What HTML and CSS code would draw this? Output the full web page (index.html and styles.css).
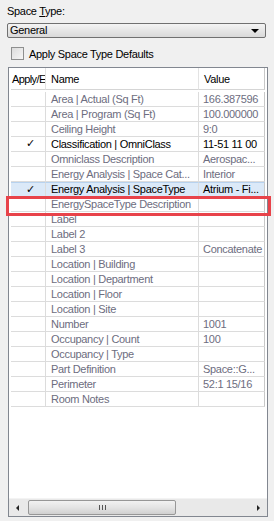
FILE: index.html
```html
<!DOCTYPE html>
<html>
<head>
<meta charset="utf-8">
<link rel="stylesheet" href="styles.css">
</head>
<body>
<div class="label">Space <u>T</u>ype:</div>
<div class="combo"><span>General</span><span class="arrow"></span></div>
<div class="check-row"><span class="checkbox"></span><span>Apply Space Type Defaults</span></div>
<div class="panel">
  <div class="grid-wrap">
    <div class="grid">
      <div class="hcell apply">Apply/E</div><div class="hcell">Name</div><div class="hcell last">Value</div>

      <div class="c"></div><div class="c g">Area | Actual (Sq Ft)</div><div class="c g v">166.387596</div>
      <div class="c"></div><div class="c g">Area | Program (Sq Ft)</div><div class="c g v">100.000000</div>
      <div class="c"></div><div class="c g">Ceiling Height</div><div class="c g v">9:0</div>
      <div class="c ck">✓</div><div class="c">Classification | OmniClass</div><div class="c v">11-51 11 00</div>
      <div class="c"></div><div class="c g">Omniclass Description</div><div class="c g v">Aerospac...</div>
      <div class="c"></div><div class="c g">Energy Analysis | Space Cat...</div><div class="c g v">Interior</div>
      <div class="c ck sel">✓</div><div class="c sel">Energy Analysis | SpaceType</div><div class="c v sel">Atrium - Fi...</div>
      <div class="c"></div><div class="c g">EnergySpaceType Description</div><div class="c g v"></div>
      <div class="c"></div><div class="c g">Label</div><div class="c g v"></div>
      <div class="c"></div><div class="c g">Label 2</div><div class="c g v"></div>
      <div class="c"></div><div class="c g">Label 3</div><div class="c g v">Concatenate</div>
      <div class="c"></div><div class="c g">Location | Building</div><div class="c g v"></div>
      <div class="c"></div><div class="c g">Location | Department</div><div class="c g v"></div>
      <div class="c"></div><div class="c g">Location | Floor</div><div class="c g v"></div>
      <div class="c"></div><div class="c g">Location | Site</div><div class="c g v"></div>
      <div class="c"></div><div class="c g">Number</div><div class="c g v">1001</div>
      <div class="c"></div><div class="c g">Occupancy | Count</div><div class="c g v">100</div>
      <div class="c"></div><div class="c g">Occupancy | Type</div><div class="c g v"></div>
      <div class="c"></div><div class="c g">Part Definition</div><div class="c g v">Space::G...</div>
      <div class="c"></div><div class="c g">Perimeter</div><div class="c g v">52:1 15/16</div>
      <div class="c"></div><div class="c g">Room Notes</div><div class="c g v"></div>
    </div>
  </div>
  <div class="hscroll">
    <div class="sbtn"><span class="tri-l"></span></div>
    <div class="track"><div class="thumb"><span class="grip"></span></div></div>
    <div class="sbtn"><span class="tri-r"></span></div>
  </div>
</div>
<div class="redbox"></div>
</body>
</html>
```
FILE: styles.css
```css
html, body {
  margin: 0;
  padding: 0;
}
body {
  width: 274px;
  height: 521px;
  background: #f0f0f0;
  font-family: "Liberation Sans", Arial, sans-serif;
  font-size: 11px;
  letter-spacing: -0.3px;
  color: #000;
  position: relative;
  overflow: hidden;
}
.label {
  padding: 5px 0 0 7px;
  height: 13px;
  line-height: 13px;
}
.combo {
  margin: 5px 0 0 7px;
  width: 255px;
  height: 13px;
  border: 1px solid #707070;
  border-radius: 2px;
  background: linear-gradient(#f4f4f4, #e6e6e6 50%, #d9d9d9);
  display: flex;
  align-items: center;
  justify-content: space-between;
  padding-left: 2px;
  line-height: 13px;
}
.arrow {
  width: 0;
  height: 0;
  border-left: 4px solid transparent;
  border-right: 4px solid transparent;
  border-top: 4px solid #000;
  margin-right: 6px;
}
.check-row {
  display: flex;
  align-items: center;
  margin: 9px 0 0 11px;
  height: 13px;
  gap: 5px;
}
.checkbox {
  width: 11px;
  height: 11px;
  border: 1px solid #8e8f8f;
  background: linear-gradient(135deg, #dcdcdc, #f6f6f6);
  box-sizing: content-box;
}
.panel {
  position: absolute;
  left: 8px;
  top: 67px;
  width: 258px;
  height: 448px;
  border: 1px solid #828790;
  background: #fff;
  display: flex;
  flex-direction: column;
}
.grid-wrap {
  flex: 1;
  padding-left: 2px;
  overflow: hidden;
}
.grid {
  display: grid;
  grid-template-columns: 35px 153px 66px;
  grid-template-rows: 24px;
  grid-auto-rows: 15px;
}
.grid .hcell {
  height: 21px;
  line-height: 22px;
  padding-left: 5px;
  border-right: 1px solid #e3e3e3;
  border-bottom: 1px solid #d5d5d5;
  white-space: nowrap;
  overflow: hidden;
  margin-bottom: 2px;
  position: relative;
}
.grid .hcell::after {
  content: "";
  position: absolute;
  left: 0;
  right: -1px;
  bottom: -3px;
  height: 1px;
  background: #a0a0a0;
}
.grid .hcell.apply {
  padding-left: 1px;
  letter-spacing: -0.6px;
}
.grid .hcell.last {
  border-right: 1px solid #c8c8c8;
}
.c {
  border-right: 1px solid #dcdcdc;
  border-bottom: 1px solid #dcdcdc;
  padding-left: 5px;
  line-height: 14px;
  white-space: nowrap;
  overflow: hidden;
  color: #000;
}
.c.g {
  color: #6d6d80;
}
.c.v {
  padding-left: 4px;
  border-right-color: #c8c8c8;
}
.c.ck {
  padding-left: 15px;
  font-family: "DejaVu Sans", sans-serif;
  font-size: 11px;
}
.c.sel {
  background: #dbe9f8;
  border-top: 1px solid #b7d2ef;
  line-height: 13px;
}
.hscroll {
  height: 17px;
  display: flex;
  align-items: stretch;
  background: #e9e9e9;
  border-top: 1px solid #f3f3f3;
}
.sbtn {
  width: 17px;
  display: flex;
  align-items: center;
  justify-content: center;
}
.tri-l {
  width: 0; height: 0;
  border-top: 3px solid transparent;
  border-bottom: 3px solid transparent;
  border-right: 3px solid #222;
}
.tri-r {
  width: 0; height: 0;
  border-top: 3px solid transparent;
  border-bottom: 3px solid transparent;
  border-left: 3px solid #222;
}
.track {
  flex: 1;
  padding: 1px 0;
  display: flex;
}
.thumb {
  margin-left: 2px;
  width: 146px;
  border: 1px solid #979797;
  border-radius: 2px;
  background: linear-gradient(#f2f2f2, #e4e4e4 50%, #d0d0d0);
  display: flex;
  align-items: center;
  justify-content: center;
}
.grip {
  width: 7px;
  height: 5px;
  background: repeating-linear-gradient(90deg, #555 0 1px, transparent 1px 3px);
}
.redbox {
  position: absolute;
  left: 6px;
  top: 196px;
  width: 259px;
  height: 14px;
  border: 3px solid #e8434a;
}
```
